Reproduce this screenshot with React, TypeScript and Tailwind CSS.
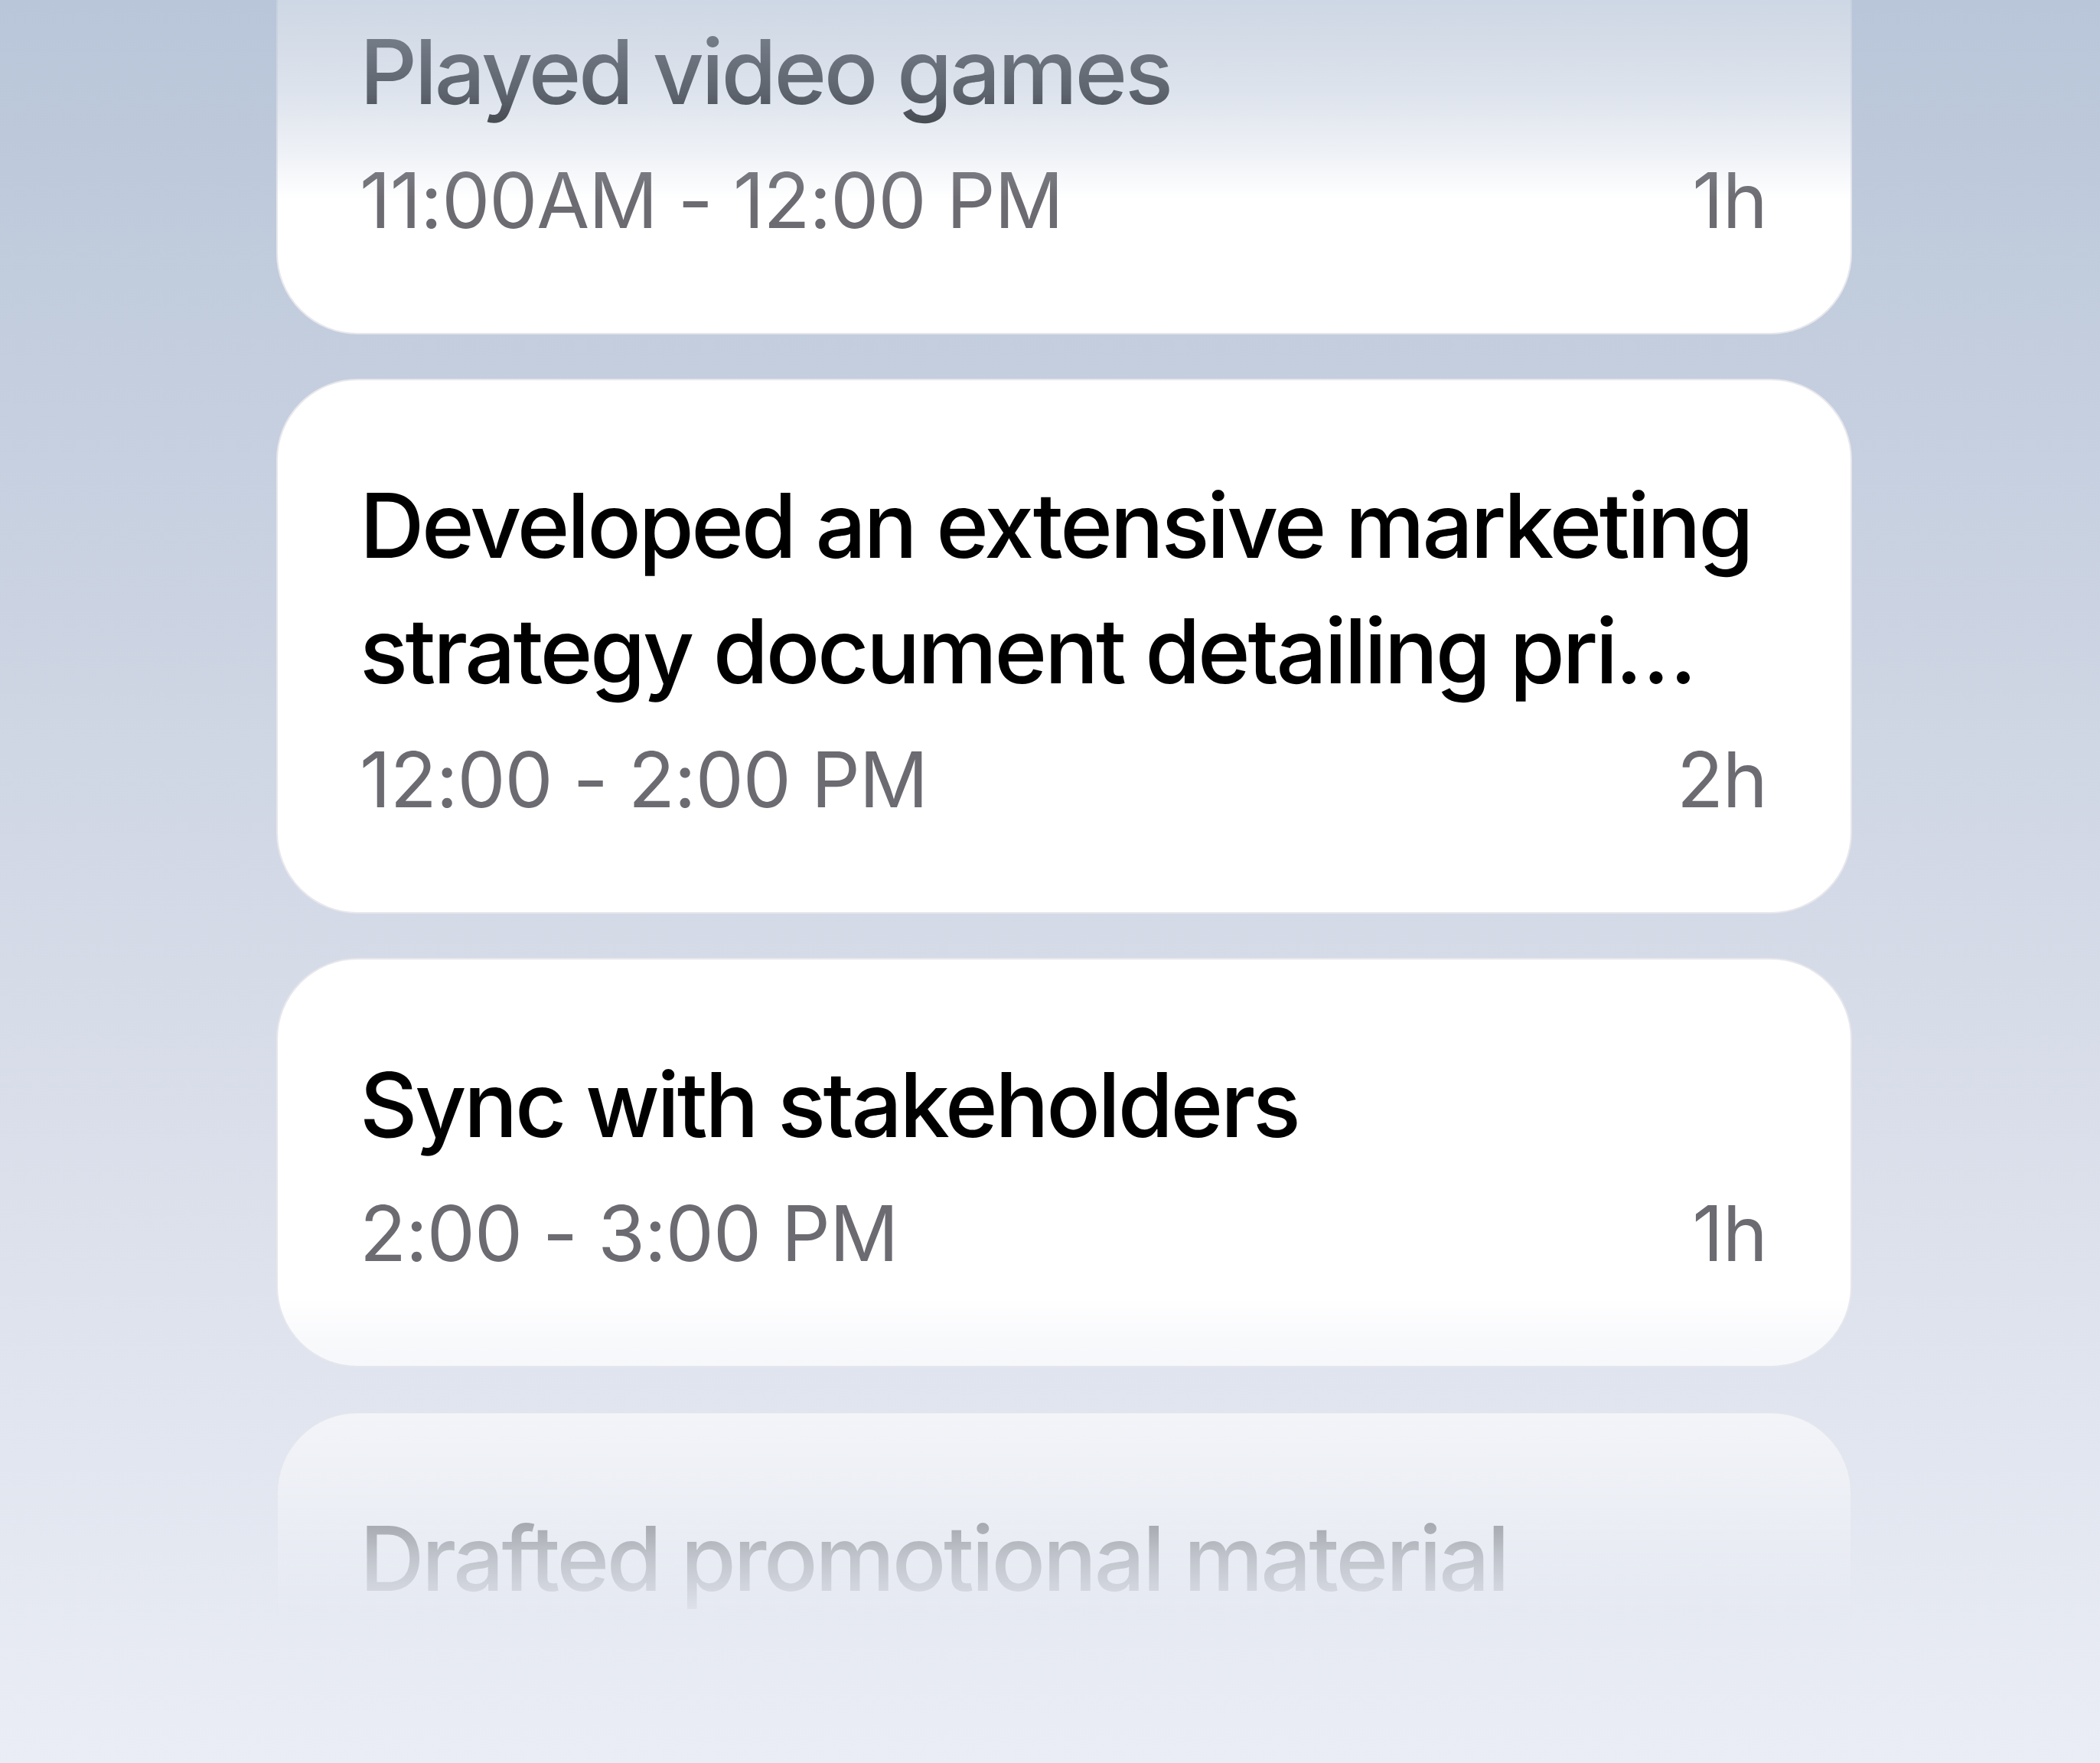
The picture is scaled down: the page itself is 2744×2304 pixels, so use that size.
import React from 'react';

interface Entry {
  id: number;
  title: string[];
  range: string;
  duration?: string;
}

const entries: Entry[] = [
  { id: 1, title: ['Played video games'], range: '11:00AM - 12:00 PM', duration: '1h' },
  {
    id: 2,
    title: ['Developed an extensive marketing', 'strategy document detailing pri…'],
    range: '12:00 - 2:00 PM',
    duration: '2h',
  },
  { id: 3, title: ['Sync with stakeholders'], range: '2:00 - 3:00 PM', duration: '1h' },
  { id: 4, title: ['Drafted promotional material'], range: '3:00 - 4:30 PM', duration: '1.5h' },
];

const EntryCard: React.FC<{ entry: Entry }> = ({ entry }) => (
  <div className="rounded-[106px] border-2 border-[#e7e7ec] bg-white pl-[107px] pr-[109px] pt-[108px] pb-[103px]">
    <div className="text-[117px] leading-[164px] font-medium text-black tracking-[-3.4px]">
      {entry.title.map((line) => (
        <div key={line} className="whitespace-nowrap">
          {line}
        </div>
      ))}
    </div>
    <div className="mt-[16px] flex items-baseline justify-between text-[100px] leading-[140px] text-[#6c6b71] tracking-[-1px]">
      <span>{entry.range}</span>
      <span>{entry.duration}</span>
    </div>
  </div>
);

export default function App() {
  return (
    <div
      className="w-[2744px] h-[2304px] overflow-hidden bg-gradient-to-b from-[#b9c6d9] via-[#d3d9e6] to-[#eaedf5]"
      style={{ fontFamily: 'Inter, "Noto Sans", sans-serif' }}
    >
      <div className="h-full w-full [mask-image:linear-gradient(to_bottom,rgba(0,0,0,0.2)_0px,rgba(0,0,0,0.33)_120px,rgba(0,0,0,0.5)_220px,rgba(0,0,0,0.75)_300px,#000_360px,#000_1790px,rgba(0,0,0,0.78)_1850px,rgba(0,0,0,0.57)_1950px,rgba(0,0,0,0.37)_2050px,rgba(0,0,0,0.16)_2130px,transparent_2220px)]">
        <div className="-mt-[98px] ml-[361px] w-[2059px] flex flex-col gap-[58px]">
          {entries.map((entry) => (
            <EntryCard key={entry.id} entry={entry} />
          ))}
        </div>
      </div>
    </div>
  );
}
